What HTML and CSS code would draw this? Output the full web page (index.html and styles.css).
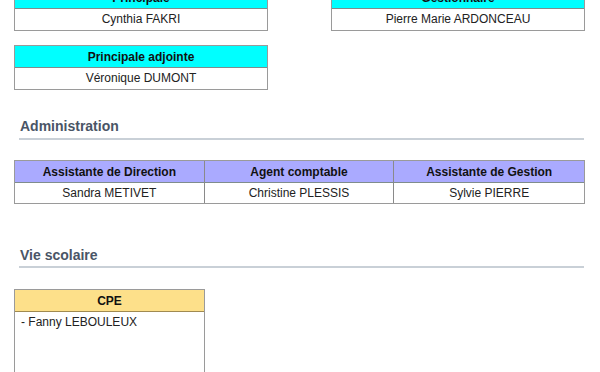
FILE: index.html
```html
<!DOCTYPE html>
<html lang="fr">
<head>
<meta charset="utf-8">
<title>Organigramme</title>
<link rel="stylesheet" href="styles.css">
</head>
<body>
<div class="page">
  <div class="duo">
    <div class="box">
      <div class="head cyan">Principale</div>
      <div class="cell">Cynthia FAKRI</div>
    </div>
    <div class="box">
      <div class="head cyan">Gestionnaire</div>
      <div class="cell">Pierre Marie ARDONCEAU</div>
    </div>
    <div class="box">
      <div class="head cyan">Principale adjointe</div>
      <div class="cell">Véronique DUMONT</div>
    </div>
  </div>

  <h2 class="section admin-title">Administration</h2>
  <div class="box trio">
    <div class="head lav">Assistante de Direction</div>
    <div class="head lav">Agent comptable</div>
    <div class="head lav">Assistante de Gestion</div>
    <div class="cell">Sandra METIVET</div>
    <div class="cell">Christine PLESSIS</div>
    <div class="cell">Sylvie PIERRE</div>
  </div>

  <h2 class="section vie-title">Vie scolaire</h2>
  <div class="cpe-row">
    <div class="box cpe">
      <div class="head yellow">CPE</div>
      <div class="cell list">- Fanny LEBOULEUX</div>
    </div>
  </div>
</div>
</body>
</html>
```

FILE: styles.css
```css
html, body {
  margin: 0;
  padding: 0;
  background: #fff;
}
body {
  font-family: "Liberation Sans", Arial, sans-serif;
  font-size: 12px;
  color: #222;
  overflow: hidden;
}
.page {
  margin-top: -14px;
  padding: 0 15px 0 14px;
  width: 571px;
}
.duo {
  display: grid;
  grid-template-columns: 254px 254px;
  justify-content: space-between;
  row-gap: 14px;
}
.box {
  border: 1px solid #9a9a9a;
  display: grid;
}
.head {
  height: 21px;
  line-height: 22px;
  text-align: center;
  font-weight: bold;
  color: #111;
  border-bottom: 1px solid #7f8c8c;
}
.cyan { background: #00ffff; }
.lav { background: #aaaaff; }
.yellow { background: #fde08a; border-bottom-color: #a08a50; }
.cell {
  height: 21px;
  line-height: 21px;
  text-align: center;
  color: #222;
}
.section {
  margin: 0 1px 0 5px;
  font-size: 14px;
  font-weight: bold;
  color: #4a5566;
  border-bottom: 2px solid #c9d0d7;
  line-height: 17px;
  padding: 0 0 3px 1px;
}
.admin-title { margin-top: 28px; }
.trio {
  margin-top: 20px;
  grid-template-columns: 1fr 1fr 1fr;
}
.trio .head, .trio .cell { border-right: 1px solid #8a8a8a; }
.trio .head:nth-child(3), .trio .cell:nth-child(6) { border-right: 0; }
.trio .cell { height: 20px; line-height: 20px; }
.vie-title { margin-top: 43px; padding-bottom: 2px; }
.cpe-row {
  margin-top: 21px;
  display: grid;
  grid-template-columns: 191px;
}
.cpe { grid-template-rows: auto 120px; }
.cell.list {
  text-align: left;
  padding: 3px 6px;
  height: auto;
  line-height: 15px;
}
```
